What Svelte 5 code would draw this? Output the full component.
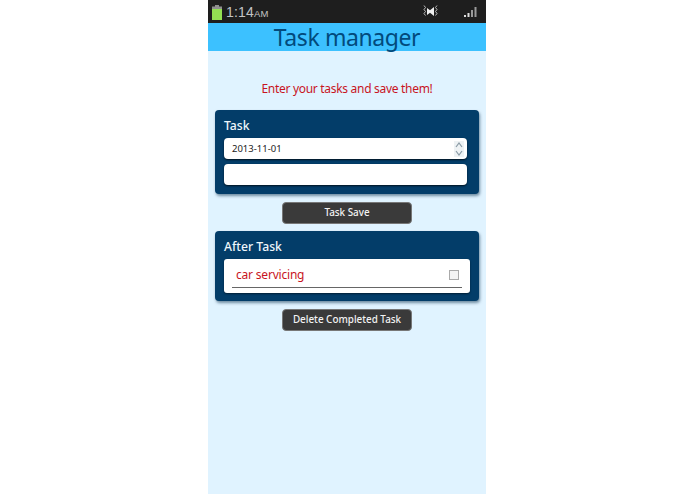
<script>
  const taskDate = '2013-11-01';
  const doneTasks = ['car servicing'];
</script>

<div class="stage">
  <div class="phone">
    <div class="status-bar">
      <svg class="battery" width="10" height="15" viewBox="0 0 10 15">
        <rect x="3" y="0" width="4" height="2" fill="#8f8f8f" />
        <rect x="0" y="1.5" width="10" height="2.5" fill="#8f8f8f" />
        <rect x="0" y="4" width="10" height="11" fill="#93e052" />
      </svg>
      <span class="clock">1:14<small>AM</small></span>
      <svg class="mute" width="15" height="13" viewBox="0 0 15 13">
        <path d="M1 0.5l1.5 2-1.5 2 1.5 2-1.5 2 1.5 2M14 0.5l-1.5 2 1.5 2-1.5 2 1.5 2-1.5 2" fill="none" stroke="#bbb" stroke-width="1" />
        <path d="M4 3l3 2.2L11 2v9L7 7.8 4 10z" fill="#f0f0f0" />
      </svg>
      <svg class="signal" width="13" height="10" viewBox="0 0 13 10">
        <rect x="0" y="8" width="2" height="2" fill="#ddd" />
        <rect x="3.5" y="6" width="2" height="4" fill="#ddd" />
        <rect x="7" y="3" width="2" height="7" fill="#9a9a9a" />
        <rect x="10.5" y="0" width="2" height="10" fill="#9a9a9a" />
      </svg>
    </div>

    <header>Task manager</header>

    <main>
      <p class="intro">Enter your tasks and save them!</p>

      <section class="card">
        <h2>Task</h2>
        <div class="field date">
          <span>{taskDate}</span>
          <svg class="spin" width="10" height="16" viewBox="0 0 10 16">
            <path d="M2 6l3-4 3 4M2 10l3 4 3-4" fill="none" stroke="#8a9aa5" stroke-width="1.2" />
          </svg>
        </div>
        <div class="field"></div>
      </section>

      <button class="btn save">Task Save</button>

      <section class="card after">
        <h2>After Task</h2>
        <div class="list">
          {#each doneTasks as task}
            <div class="row">
              <span>{task}</span>
              <i class="check"></i>
            </div>
          {/each}
        </div>
      </section>

      <button class="btn">Delete Completed Task</button>
    </main>
  </div>
</div>

<style>
  :global(body) {
    margin: 0;
    background: #fff;
  }

  .stage {
    display: flex;
    justify-content: center;
    height: 494px;
    overflow: hidden;
    font-family: 'Noto Sans', 'Open Sans', sans-serif;
  }

  .phone {
    width: 278px;
    margin-right: 1px;
    display: flex;
    flex-direction: column;
    background: #e0f3ff;
  }

  .status-bar {
    height: 23px;
    flex: none;
    display: flex;
    align-items: center;
    background: #1e1e1e;
    padding: 0 9px 0 4px;
  }

  .battery {
    margin-top: 1px;
  }

  .clock {
    margin-left: 4px;
    color: #c4c4c4;
    font-family: 'Liberation Sans', sans-serif;
    font-size: 14px;
    letter-spacing: 0.2px;
  }

  .clock small {
    font-size: 9.5px;
    letter-spacing: 0;
  }

  .mute {
    margin-left: auto;
    margin-right: 26px;
  }

  .signal {
    margin-top: 1px;
  }

  header {
    height: 28px;
    flex: none;
    background: #3cc1ff;
    color: #024a7c;
    font-size: 23px;
    letter-spacing: -0.4px;
    line-height: 28px;
    text-align: center;
  }

  main {
    flex: 1;
    display: flex;
    flex-direction: column;
    align-items: center;
    padding: 0 7px;
  }

  .intro {
    margin: 28px 0 12px;
    height: 19px;
    color: #c8141e;
    font-size: 12px;
    letter-spacing: -0.3px;
    line-height: 19px;
  }

  .card {
    align-self: stretch;
    box-sizing: border-box;
    height: 84px;
    padding: 8px 12px 0 9px;
    border-radius: 4px;
    background: #033d69;
    box-shadow: 1px 2px 3px rgba(0, 40, 70, 0.5);
  }

  .card.after {
    height: 70px;
  }

  h2 {
    margin: 0;
    height: 20px;
    color: #eef6fb;
    font-size: 12.2px;
    font-weight: 500;
    line-height: 15px;
  }

  .field {
    height: 21px;
    margin-bottom: 5px;
    padding: 0 3px 0 8px;
    display: flex;
    align-items: center;
    justify-content: space-between;
    border-radius: 4px;
    background: #fff;
    box-shadow: 0 1px 2px rgba(0, 0, 0, 0.7);
    color: #222;
    font-size: 9.5px;
  }

  .spin {
    background: #eef2f4;
  }

  .list {
    height: 34px;
    box-sizing: border-box;
    margin-right: -3px;
    padding: 0 8px;
    border-radius: 3px;
    background: #fff;
    box-shadow: 0 1px 2px rgba(0, 0, 0, 0.5);
  }

  .row {
    height: 29px;
    box-sizing: border-box;
    padding: 3px 3px 0 4px;
    display: flex;
    align-items: center;
    justify-content: space-between;
    border-bottom: 1px solid #666;
    color: #c8141e;
    font-size: 12px;
    letter-spacing: -0.2px;
  }

  .check {
    width: 8px;
    height: 8px;
    border: 1px solid #aaa;
    background: #f4f4f4;
  }

  .btn {
    width: 130px;
    height: 22px;
    flex: none;
    margin: 8px 0 7px;
    padding: 0 0 2px;
    border: 1px solid #777;
    border-radius: 4px;
    background: #3a3a3a;
    color: #f2f2f2;
    font-family: inherit;
    font-size: 9.9px;
    font-weight: 500;
  }
</style>
